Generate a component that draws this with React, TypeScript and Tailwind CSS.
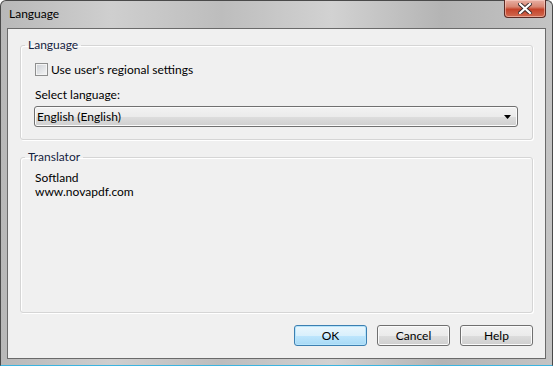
import React from 'react';

const font = { fontFamily: '"Segoe UI", Lato, "Noto Sans", sans-serif' };

function CloseButton() {
  return (
    <div className="w-[42px] h-[18px] -mt-px rounded-b-[4px] border border-t-0 border-[#5a2a24] bg-[linear-gradient(to_bottom,#e8b0a4_0%,#d88672_40%,#c5432a_55%,#d06a50_100%)] flex items-center justify-center shadow-[inset_0_0_0_1px_rgba(255,220,210,0.5)]">
      <svg width="14" height="11" viewBox="0 0 14 11">
        <path d="M2 1 L12 10 M12 1 L2 10" stroke="#3a2a2a" strokeWidth="4" strokeLinecap="square" />
        <path d="M2 1 L12 10 M12 1 L2 10" stroke="#ffffff" strokeWidth="2.2" strokeLinecap="square" />
      </svg>
    </div>
  );
}

function Button({ label, primary }: { label: string; primary?: boolean }) {
  return (
    <button
      className={`w-[73px] h-[21px] rounded-[3px] border text-[12px] leading-none text-black ${
        primary
          ? 'border-[#3c7fb1] bg-[linear-gradient(to_bottom,#eaf6fd_0%,#d9f0fc_50%,#bee6fd_51%,#a7d9f5_100%)] shadow-[inset_0_0_0_1px_#b6e4fb]'
          : 'border-[#707070] bg-[linear-gradient(to_bottom,#f2f2f2_0%,#ebebeb_50%,#dddddd_51%,#cfcfcf_100%)] shadow-[inset_0_0_0_1px_#fbfbfb]'
      }`}
    >
      {label}
    </button>
  );
}

function Group({ title, className, children }: { title: string; className?: string; children: React.ReactNode }) {
  return (
    <fieldset className={`border border-[#d5d5d5] rounded-[3px] shadow-[inset_1px_1px_0_#ffffff,1px_1px_0_#ffffff] px-[14px] ${className ?? ''}`}>
      <legend className="-ml-[10px] px-[3px] text-[12px] leading-[14px] text-[#15233f]">{title}</legend>
      {children}
    </fieldset>
  );
}

export default function App() {
  return (
    <div style={font} className="w-[553px] h-[366px] flex flex-col rounded-t-[6px] border border-[#4a4a4a] border-b-[#3cb4e0] bg-[linear-gradient(to_right,#b8b8b8_0%,#cfcfcf_20%,#bdbdbd_40%,#d2d2d2_60%,#b4b4b4_80%,#c4c4c4_100%)] px-[6px] pb-[6px] select-none">
      <div className="h-[27px] flex items-start justify-between">
        <span className="pl-[2px] pt-[5px] text-[12px] leading-[16px] text-black">Language</span>
        <CloseButton />
      </div>
      <div className="flex-1 border border-[#6a6a6a] bg-[#f0f0f0] px-[12px] pt-[9px] flex flex-col">
        <Group title="Language" className="pt-[11px] pb-[12px]">
          <label className="flex items-center gap-[3px] h-[13px] text-[12px] text-black">
            <span className="w-[13px] h-[13px] border border-[#8e8f8f] bg-[linear-gradient(135deg,#cbcfd5_0%,#f6f6f6_100%)] shadow-[inset_0_0_0_1px_#f4f4f4]" />
            <span className="leading-[13px]">Use user's regional settings</span>
          </label>
          <div className="mt-[11px] text-[12px] leading-[15px] text-black">Select language:</div>
          <div className="mt-[4px] h-[21px] -ml-[1px] flex items-center justify-between rounded-[3px] border border-[#707070] bg-[linear-gradient(to_bottom,#f2f2f2_0%,#ebebeb_50%,#dddddd_51%,#cfcfcf_100%)] shadow-[inset_0_0_0_1px_#fbfbfb] pl-[2px] pr-[6px]">
            <span className="text-[12px] leading-none text-black">English (English)</span>
            <svg width="7" height="4" viewBox="0 0 7 4">
              <path d="M0 0 H7 L3.5 4 Z" fill="#000" />
            </svg>
          </div>
        </Group>
        <Group title="Translator" className="mt-[10px] h-[163px] pt-[7px]">
          <div className="text-[12px] leading-[14px] text-black">
            <div>Softland</div>
            <div>www.novapdf.com</div>
          </div>
        </Group>
        <div className="mt-[12px] flex justify-end gap-[10px]">
          <Button label="OK" primary />
          <Button label="Cancel" />
          <Button label="Help" />
        </div>
      </div>
    </div>
  );
}
